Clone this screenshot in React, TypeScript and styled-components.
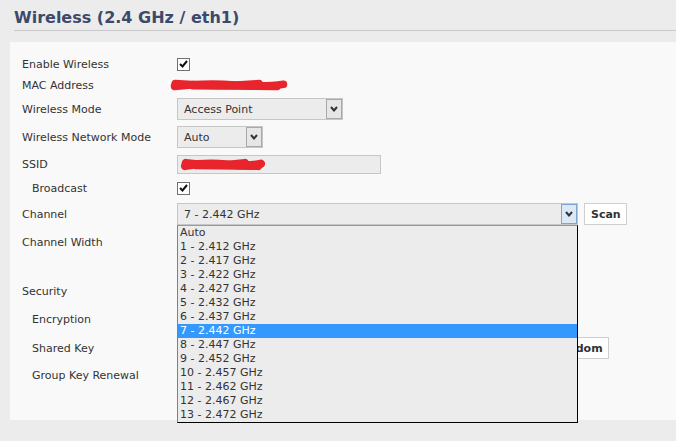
import React from "react";
import styled, { createGlobalStyle } from "styled-components";

const GlobalStyle = createGlobalStyle`
  html, body {
    margin: 0;
    padding: 0;
    background: #ececec;
  }
  body {
    font-family: "DejaVu Sans", Tahoma, sans-serif;
    font-size: 11px;
    color: #333;
  }
`;

const Page = styled.div`
  width: 676px;
  height: 441px;
  overflow: hidden;
  padding-top: 8px;
  box-sizing: border-box;
`;

const Title = styled.h1`
  margin: 0 0 11px 14px;
  padding: 0 0 2px 0;
  height: 20px;
  line-height: 20px;
  font-size: 16px;
  font-weight: bold;
  color: #3b4a6b;
  border-bottom: 1px solid #c9c9c9;
`;

const Panel = styled.div`
  margin-left: 10px;
  background: #f9f9f9;
  padding: 12px 0 33px 12px;
`;

const Row = styled.div<{ $h: number }>`
  display: grid;
  grid-template-columns: 155px 1fr;
  align-items: center;
  height: ${(p) => p.$h}px;
`;

const Label = styled.div<{ $sub?: boolean }>`
  padding-left: ${(p) => (p.$sub ? 10 : 0)}px;
  white-space: nowrap;
`;

const Field = styled.div`
  display: flex;
  align-items: center;
  gap: 6px;
`;

const Spacer = styled.div`
  height: 21px;
`;

const CheckBox = styled.span`
  width: 11px;
  height: 11px;
  border: 1px solid #707070;
  background: #fff;
  display: flex;
  align-items: center;
  justify-content: center;
`;

const SelectBox = styled.div<{ $w: number }>`
  position: relative;
  width: ${(p) => p.$w}px;
  height: 22px;
  box-sizing: border-box;
  border: 1px solid #c6c6c6;
  background: #ececec;
  display: flex;
  align-items: center;
  padding-left: 6px;
`;

const SelectText = styled.span`
  flex: 1;
  white-space: nowrap;
`;

const ArrowBox = styled.span<{ $focus?: boolean }>`
  width: 16px;
  height: 20px;
  box-sizing: border-box;
  border: 1px solid ${(p) => (p.$focus ? "#7fa6cf" : "#a9a9a9")};
  background: ${(p) => (p.$focus ? "#dbe9f7" : "#e6e6e6")};
  display: flex;
  align-items: center;
  justify-content: center;
`;

const TextInput = styled.div<{ $w: number }>`
  width: ${(p) => p.$w}px;
  height: 19px;
  box-sizing: border-box;
  border: 1px solid #c6c6c6;
  background: #ececec;
  display: flex;
  align-items: center;
  padding-left: 1px;
`;

const Button = styled.div`
  height: 22px;
  box-sizing: border-box;
  border: 1px solid #cfcfcf;
  background: #fff;
  padding: 0 5px 0 6px;
  display: flex;
  align-items: center;
  font-weight: bold;
  font-size: 11px;
  color: #333;
`;

const DropList = styled.div`
  position: absolute;
  top: 21px;
  left: -1px;
  width: 401px;
  box-sizing: border-box;
  border: 1px solid #000;
  border-top-color: #9a9a9a;
  border-left-color: #808080;
  background: #ececec;
  z-index: 10;
`;

const Option = styled.div<{ $selected?: boolean }>`
  height: 14px;
  line-height: 14px;
  padding-left: 2px;
  white-space: nowrap;
  background: ${(p) => (p.$selected ? "#3399ff" : "transparent")};
  color: ${(p) => (p.$selected ? "#fff" : "#333")};
`;

const Scribble = styled.svg<{ $shift?: number }>`
  display: block;
  margin-left: ${(p) => p.$shift ?? 0}px;
`;

const Check = () => (
  <svg width="9" height="8" viewBox="0 0 9 8">
    <path d="M1 4 L3.5 6.5 L8 1" fill="none" stroke="#111" strokeWidth="2" />
  </svg>
);

const Chevron = () => (
  <svg width="8" height="6" viewBox="0 0 8 6">
    <path d="M1 1 L4 4.5 L7 1" fill="none" stroke="#333" strokeWidth="2" />
  </svg>
);

// redacted values are drawn as a red marker smear
const Redact = ({ w, h, shift }: { w: number; h: number; shift?: number }) => (
  <Scribble $shift={shift} width={w} height={h} viewBox={`0 0 ${w} ${h}`}>
    <g fill="none" stroke="#e8242c" strokeLinecap="round" strokeWidth={h * 0.55}>
      <path d={`M${h * 0.4} ${h * 0.6} Q ${w * 0.3} ${h * 0.35} ${w * 0.55} ${h * 0.5} T ${w - h * 0.4} ${h * 0.45}`} />
      <path d={`M${h * 0.45} ${h * 0.4} Q ${w * 0.4} ${h * 0.65} ${w * 0.75} ${h * 0.4}`} />
      <path d={`M${w * 0.2} ${h * 0.55} L ${w * 0.9} ${h * 0.6}`} />
    </g>
  </Scribble>
);

const channels = [
  "Auto",
  "1 - 2.412 GHz",
  "2 - 2.417 GHz",
  "3 - 2.422 GHz",
  "4 - 2.427 GHz",
  "5 - 2.432 GHz",
  "6 - 2.437 GHz",
  "7 - 2.442 GHz",
  "8 - 2.447 GHz",
  "9 - 2.452 GHz",
  "10 - 2.457 GHz",
  "11 - 2.462 GHz",
  "12 - 2.467 GHz",
  "13 - 2.472 GHz",
];

const Select = ({ w, value, focus }: { w: number; value?: string; focus?: boolean }) => (
  <SelectBox $w={w}>
    <SelectText>{value}</SelectText>
    <ArrowBox $focus={focus}>
      <Chevron />
    </ArrowBox>
  </SelectBox>
);

const App = () => {
  const selected = "7 - 2.442 GHz";

  return (
    <Page>
      <GlobalStyle />
      <Title>Wireless (2.4 GHz / eth1)</Title>
      <Panel>
        <Row $h={20}>
          <Label>Enable Wireless</Label>
          <Field>
            <CheckBox>
              <Check />
            </CheckBox>
          </Field>
        </Row>
        <Row $h={22}>
          <Label>MAC Address</Label>
          <Field>
            <Redact w={120} h={14} shift={-8} />
          </Field>
        </Row>
        <Row $h={26}>
          <Label>Wireless Mode</Label>
          <Field>
            <Select w={166} value="Access Point" />
          </Field>
        </Row>
        <Row $h={30}>
          <Label>Wireless Network Mode</Label>
          <Field>
            <Select w={86} value="Auto" />
          </Field>
        </Row>
        <Row $h={24}>
          <Label>SSID</Label>
          <Field>
            <TextInput $w={204}>
              <Redact w={88} h={15} />
            </TextInput>
          </Field>
        </Row>
        <Row $h={24}>
          <Label $sub>Broadcast</Label>
          <Field>
            <CheckBox>
              <Check />
            </CheckBox>
          </Field>
        </Row>
        <Row $h={28}>
          <Label>Channel</Label>
          <Field>
            <SelectBox $w={401}>
              <SelectText>{selected}</SelectText>
              <ArrowBox $focus>
                <Chevron />
              </ArrowBox>
              <DropList>
                {channels.map((c) => (
                  <Option key={c} $selected={c === selected}>
                    {c}
                  </Option>
                ))}
              </DropList>
            </SelectBox>
            <Button>Scan</Button>
          </Field>
        </Row>
        <Row $h={28}>
          <Label>Channel Width</Label>
          <Field>
            <Select w={120} />
          </Field>
        </Row>
        <Spacer />
        <Row $h={28}>
          <Label>Security</Label>
          <Field>
            <Select w={160} />
          </Field>
        </Row>
        <Row $h={28}>
          <Label $sub>Encryption</Label>
          <Field>
            <Select w={100} />
          </Field>
        </Row>
        <Row $h={30}>
          <Label $sub>Shared Key</Label>
          <Field>
            <TextInput $w={362} />
            <Button>Random</Button>
          </Field>
        </Row>
        <Row $h={24}>
          <Label $sub>Group Key Renewal</Label>
          <Field>
            <TextInput $w={60} />
          </Field>
        </Row>
      </Panel>
    </Page>
  );
};

export default App;
